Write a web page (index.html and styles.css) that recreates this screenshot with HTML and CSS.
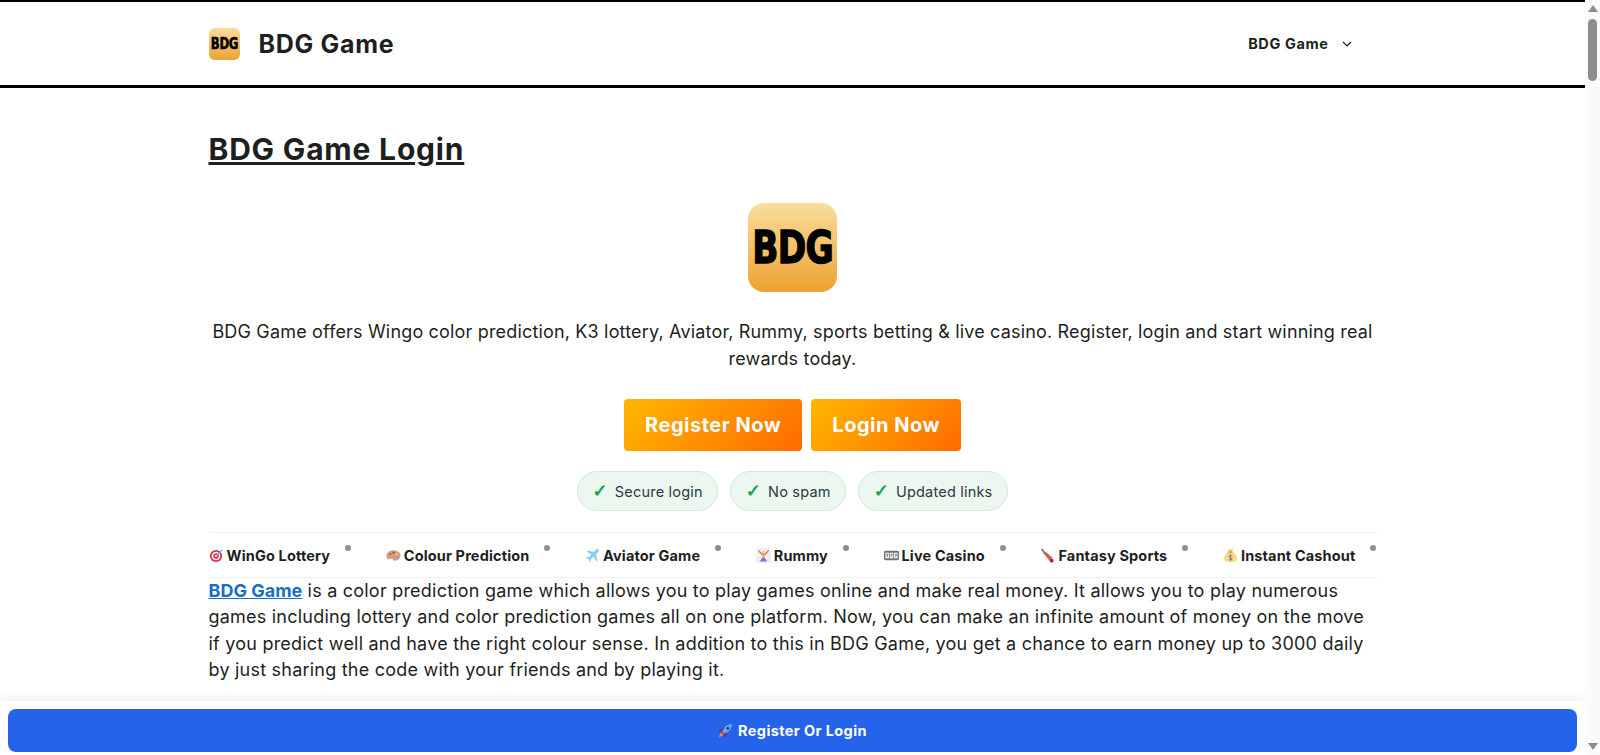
FILE: index.html
```html
<!DOCTYPE html>
<html lang="en">
<head>
    <meta charset="UTF-8">
    <meta name="viewport" content="width=device-width, initial-scale=1.0">
    <title>BDG Game Login</title>
    <link rel="stylesheet" href="styles.css">
</head>
<body>
    <div class="window">
        <div class="page">
            <!-- Site header -->
            <header class="site-header">
                <div class="header-inner">
                    <a class="brand" href="#">
                        <span class="app-icon app-icon-small"><span>BDG</span></span>
                        <span class="brand-name">BDG Game</span>
                    </a>
                    <a class="nav-link" href="#">
                        BDG Game
                        <svg class="chevron" viewBox="0 0 10 6" width="10" height="6"><path d="M1 1l4 4 4-4" fill="none" stroke="#1d1f21" stroke-width="1.2"/></svg>
                    </a>
                </div>
            </header>

            <!-- Main content -->
            <main class="content">
                <h1 class="page-title">BDG Game Login</h1>
                <div class="hero">
                    <span class="app-icon app-icon-large"><span>BDG</span></span>
                    <p class="intro">BDG Game offers Wingo color prediction, K3 lottery, Aviator, Rummy, sports betting &amp; live casino. Register, login and start winning real rewards today.</p>
                    <div class="buttons">
                        <a class="btn" href="#">Register Now</a>
                        <a class="btn" href="#">Login Now</a>
                    </div>
                    <div class="chips">
                        <span class="chip"><b>✓</b> Secure login</span>
                        <span class="chip"><b>✓</b> No spam</span>
                        <span class="chip"><b>✓</b> Updated links</span>
                    </div>
                </div>

                <ul class="topics">
                    <li>
                        <svg class="emoji" viewBox="0 0 16 16"><circle cx="7.5" cy="8.5" r="6.5" fill="#dd2e44"/><circle cx="7.5" cy="8.5" r="4.6" fill="#fff"/><circle cx="7.5" cy="8.5" r="3" fill="#dd2e44"/><circle cx="7.5" cy="8.5" r="1.2" fill="#fff"/><path d="M8 8l6-6" stroke="#55acee" stroke-width="1.5"/></svg>
                        WinGo Lottery
                    </li>
                    <li>
                        <svg class="emoji" viewBox="0 0 16 16"><path d="M8 2.5c4.500 0 7.500 2.500 7.500 5.500s-2.500 5.500-6 5.500c-2 0-2-1.500-3-2-1-.5-2 .5-3.500.5C1 12 .5 10 .5 8.500.5 5 4 2.500 8 2.500z" fill="#d99e82"/><circle cx="4.500" cy="6.500" r="1.200" fill="#5c913b"/><circle cx="8" cy="5" r="1.200" fill="#dd2e44"/><circle cx="11.500" cy="6.500" r="1.200" fill="#ffcc4d"/><circle cx="12" cy="10" r="1.200" fill="#55acee"/></svg>
                        Colour Prediction
                    </li>
                    <li>
                        <svg class="emoji" viewBox="0 0 16 16"><path d="M14.500 1.500c-1-.8-2.300 0-3 .7L9.200 4.500 3 2.500 1.800 3.700l5 3.300L4 10l-2-.4-1 1 3 1.400L5.400 15l1-1-.4-2 3-2.800 3.300 5 1.200-1.200-2-6.200 2.300-2.300c.7-.7 1.500-2 .7-3z" fill="#8ccaf7"/></svg>
                        Aviator Game
                    </li>
                    <li>
                        <svg class="emoji" viewBox="0 0 16 16"><rect width="16" height="16" rx="2" fill="#eef0f5"/><circle cx="8" cy="4.500" r="1.800" fill="#f7c9a0"/><path d="M2.500 2.500L6 6.500h4l3.500-4" fill="none" stroke="#e86a3a" stroke-width="1.300"/><path d="M6.500 6.500h3L9 10H7z" fill="#f4a23c"/><path d="M7 10h2l3 4.500H4z" fill="#9266cc"/></svg>
                        Rummy
                    </li>
                    <li>
                        <svg class="emoji" viewBox="0 0 16 16"><rect y="3" width="16" height="10" rx="1.500" fill="#66757f"/><rect x="1.500" y="5" width="3.800" height="6" fill="#f1f2f3"/><rect x="6.100" y="5" width="3.800" height="6" fill="#f1f2f3"/><rect x="10.700" y="5" width="3.800" height="6" fill="#f1f2f3"/><path d="M2.500 6.800h1.800L3 9.500M7.100 6.800h1.800L7.600 9.500M11.700 6.800h1.800L12.200 9.500" fill="none" stroke="#dd2e44" stroke-width=".9"/></svg>
                        Live Casino
                    </li>
                    <li>
                        <svg class="emoji" viewBox="0 0 16 16"><path d="M1 1.500L2.500.5l3 4-1.500 1z" fill="#66757f"/><path d="M3.500 5.500l2.500-1.500 7.500 6.500-3 3.500z" fill="#c1694f"/><circle cx="12.500" cy="13.500" r="2" fill="#be1931"/></svg>
                        Fantasy Sports
                    </li>
                    <li>
                        <svg class="emoji" viewBox="0 0 16 16"><path d="M5 1h6L9.800 4.200h-3.600z" fill="#fdd888"/><path d="M6 4.200h4c3 1.500 5 4.500 5 7 0 3-3 4-7 4s-7-1-7-4c0-2.500 2-5.500 5-7z" fill="#fdd888"/><rect x="5.800" y="3.600" width="4.400" height="1.100" rx=".5" fill="#bf6952"/><path d="M9.800 8.300C9 7.700 6.500 7.600 6.500 9.100s3.200 1 3.200 2.500-2.700 1.400-3.500.7M8 7v6.400" fill="none" stroke="#67757f" stroke-width=".9"/></svg>
                        Instant Cashout
                    </li>
                </ul>

                <p class="body-text"><a href="#">BDG Game</a> is a color prediction game which allows you to play games online and make real money. It allows you to play numerous games including lottery and color prediction games all on one platform. Now, you can make an infinite amount of money on the move if you predict well and have the right colour sense. In addition to this in BDG Game, you get a chance to earn money up to 3000 daily by just sharing the code with your friends and by playing it.</p>
            </main>

            <!-- Sticky call to action -->
            <div class="cta-bar">
                <a class="cta" href="#">
                    <svg class="emoji" viewBox="0 0 16 16"><path d="M15 1c-3.500 0-6.500 1.500-9 5l-1.500 3 2.500 2.500L10 10c3.500-2.500 5-5.500 5-9z" fill="#55acee"/><path d="M6 6L2.500 6.500.8 9l3.700-.2zM10 10l-.5 3.500L7 15.200l.2-3.700z" fill="#be1931"/><path d="M3.500 10.500C2 11.500 1.500 13 1 15c2-.5 3.500-1 4.500-2.500z" fill="#f4900c"/><circle cx="10.500" cy="5.500" r="1.300" fill="#292f33"/></svg>
                    Register Or Login
                </a>
            </div>
        </div>

        <!-- Scrollbar of the window -->
        <div class="scrollbar">
            <span class="arrow arrow-up"></span>
            <span class="thumb"></span>
            <span class="arrow arrow-down"></span>
        </div>
    </div>
</body>
</html>
```

FILE: styles.css
```css
* {
    box-sizing: border-box;
}

body {
    margin: 0;
    font-family: Inter, "Noto Sans", sans-serif;
    color: #1d1f21;
    background: #fff;
}

a {
    text-decoration: none;
    color: inherit;
}

.window {
    display: flex;
    height: 100vh;
    overflow: hidden;
}

.page {
    flex: 1;
    min-width: 0;
    display: flex;
    flex-direction: column;
}

.site-header {
    flex: none;
    height: 88px;
    border-top: 2px solid #000;
    border-bottom: 3px solid #000;
}

.header-inner {
    width: 1200px;
    height: 100%;
    margin: 0 auto;
    padding: 0 16px;
    display: flex;
    align-items: center;
    justify-content: space-between;
}

.brand {
    display: flex;
    align-items: center;
    gap: 19px;
}

.brand-name {
    font-size: 25px;
    font-weight: 700;
    letter-spacing: 0.7px;
}

.nav-link {
    display: flex;
    align-items: center;
    gap: 13px;
    margin-right: 25px;
    font-size: 14.5px;
    font-weight: 700;
    letter-spacing: 0.6px;
}

.app-icon {
    display: flex;
    align-items: center;
    justify-content: center;
    flex: none;
    background: linear-gradient(#fadd9c, #eda232);
    color: #000;
    font-family: "DejaVu Sans", sans-serif;
    font-weight: 700;
}

.app-icon span {
    display: block;
    transform: scaleX(0.78);
}

.app-icon-small {
    width: 31px;
    height: 32px;
    border-radius: 6px;
    font-size: 15px;
    letter-spacing: -0.4px;
    -webkit-text-stroke: 0.5px #000;
}

.app-icon-large {
    width: 89px;
    height: 89px;
    border-radius: 16px;
    font-size: 44px;
    letter-spacing: -1px;
    -webkit-text-stroke: 1.4px #000;
}

.content {
    flex: 1;
    min-height: 0;
    overflow: hidden;
    width: 1200px;
    margin: 0 auto;
    padding: 0 16px;
}

.page-title {
    margin: 42px 0 35px;
    font-size: 30px;
    line-height: 38px;
    font-weight: 700;
    letter-spacing: 0.8px;
    text-decoration: underline;
}

.hero {
    display: flex;
    flex-direction: column;
    align-items: center;
}

.intro {
    margin: 26px 0 27px;
    font-size: 18px;
    line-height: 27px;
    letter-spacing: 0.17px;
    text-align: center;
}

.buttons {
    display: flex;
    gap: 9px;
}

.btn {
    display: block;
    padding: 0 21px;
    height: 52px;
    line-height: 52px;
    border-radius: 4px;
    background: linear-gradient(135deg, #ffb800, #ff6a00);
    color: #fff;
    font-size: 20px;
    font-weight: 700;
    letter-spacing: 0.5px;
}

.chips {
    display: flex;
    gap: 12px;
    margin-top: 20px;
}

.chip {
    height: 40px;
    padding: 0 14.5px;
    display: flex;
    align-items: center;
    gap: 7px;
    border: 1px solid #cfe9db;
    border-radius: 20px;
    background: #ecf7f0;
    color: #2a3b42;
    font-size: 14.5px;
    letter-spacing: 0.2px;
}

.chip b {
    font-family: "DejaVu Sans", sans-serif;
    color: #0ea34f;
    font-size: 18px;
    line-height: 1;
    -webkit-text-stroke: 0.6px #0ea34f;
}

.topics {
    list-style: none;
    margin: 21px 0 0;
    padding: 1px 0 0;
    height: 46px;
    display: flex;
    justify-content: space-between;
    align-items: center;
    border-top: 1px solid #eef0f1;
    border-bottom: 1px solid #eef0f1;
}

.topics li {
    display: flex;
    align-items: center;
    gap: 3px;
    font-size: 14.5px;
    font-weight: 700;
    letter-spacing: 0.15px;
}

/* the dot sits a little above the text line */
.topics li::after {
    content: "";
    width: 6px;
    height: 6px;
    margin: -16px 0 0 12px;
    border-radius: 50%;
    background: #8e8e8e;
}

.emoji {
    width: 15px;
    height: 15px;
    flex: none;
}

.body-text {
    margin: 0;
    font-size: 18px;
    line-height: 26.4px;
    letter-spacing: 0.22px;
}

.body-text a {
    color: #1a6fc0;
    font-weight: 700;
    letter-spacing: 0;
    text-decoration: underline;
}

.cta-bar {
    flex: none;
    height: 54px;
    padding: 8px 8px 3px;
    background: #fff;
    box-shadow: 0 -2px 10px rgba(0, 0, 0, 0.08);
}

.cta {
    display: flex;
    align-items: center;
    justify-content: center;
    gap: 5px;
    height: 43px;
    border-radius: 8px;
    background: #2563eb;
    color: #fff;
    font-size: 14.5px;
    font-weight: 700;
    letter-spacing: 0.4px;
}

.scrollbar {
    flex: none;
    width: 15px;
    display: flex;
    flex-direction: column;
    align-items: center;
    background: #fafafa;
}

.arrow {
    flex: none;
    width: 0;
    height: 0;
    border-left: 5px solid transparent;
    border-right: 5px solid transparent;
}

.arrow-up {
    margin-top: 5px;
    border-bottom: 7px solid #8e8e8e;
}

.arrow-down {
    margin-top: auto;
    margin-bottom: 5px;
    border-top: 7px solid #8e8e8e;
}

.thumb {
    flex: none;
    width: 9px;
    height: 62px;
    margin-top: 7px;
    border-radius: 5px;
    background: #8e8e8e;
}
```
